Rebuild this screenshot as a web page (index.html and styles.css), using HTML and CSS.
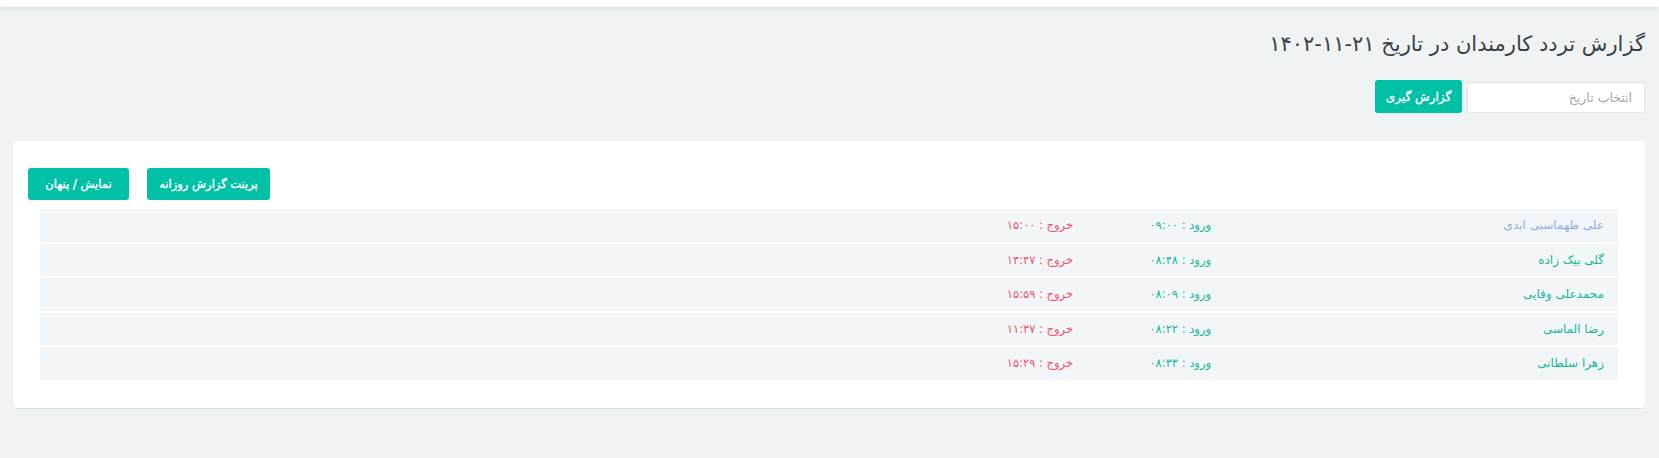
FILE: index.html
```html
<!DOCTYPE html>
<html lang="fa" dir="rtl">
<head>
<meta charset="utf-8">
<title>گزارش تردد</title>
<link rel="stylesheet" href="styles.css">
</head>
<body>
<header class="topbar"></header>
<main class="content">
  <h4 class="page-title">گزارش تردد کارمندان در تاریخ ۲۱-۱۱-۱۴۰۲</h4>
  <form class="filter">
    <input class="date-input" type="text" placeholder="انتخاب تاریخ">
    <button class="btn btn-report" type="button">گزارش گیری</button>
  </form>
  <section class="card">
    <div class="card-actions">
      <button class="btn btn-card btn-print" type="button">پرینت گزارش روزانه</button>
      <button class="btn btn-card btn-toggle" type="button">نمایش / پنهان</button>
    </div>
    <div class="list">
      <div class="row"><span class="name name-info">علی طهماسبی ابدی</span><span class="in">ورود : ۰۹:۰۰</span><span class="out">خروج : ۱۵:۰۰</span></div>
      <div class="row"><span class="name">گلی بیک زاده</span><span class="in">ورود : ۰۸:۴۸</span><span class="out">خروج : ۱۴:۴۷</span></div>
      <div class="row"><span class="name">محمدعلی وفایی</span><span class="in">ورود : ۰۸:۰۹</span><span class="out">خروج : ۱۵:۵۹</span></div>
      <div class="row"><span class="name">رضا الماسی</span><span class="in">ورود : ۰۸:۲۲</span><span class="out">خروج : ۱۱:۳۷</span></div>
      <div class="row"><span class="name">زهرا سلطانی</span><span class="in">ورود : ۰۸:۳۳</span><span class="out">خروج : ۱۵:۲۹</span></div>
    </div>
  </section>
</main>
</body>
</html>
```
FILE: styles.css
```css
* { box-sizing: border-box; }
html, body {
  margin: 0;
  padding: 0;
}
body {
  background: #eff3f4;
  font-family: "DejaVu Sans", "Noto Sans", sans-serif;
  color: #343a40;
  direction: rtl;
  height: 458px;
  overflow: hidden;
}
.topbar {
  height: 7px;
  background: #ffffff;
  box-shadow: 0 1px 4px rgba(0, 0, 0, 0.10);
}
.content {
  padding: 0 14px 0 13px;
}
.page-title {
  margin: 22px 0 0 0;
  font-size: 21px;
  font-weight: normal;
  line-height: 30px;
  color: #3a4149;
}
.filter {
  display: flex;
  align-items: flex-end;
  gap: 5px;
  margin-top: 21px;
}
.date-input {
  width: 178px;
  height: 31px;
  border: 1px solid #e1e5e8;
  border-radius: 3px;
  background: #fff;
  padding: 0 12px;
  font-family: inherit;
  font-size: 12.5px;
  color: #6c757d;
  outline: none;
}
.date-input::placeholder { color: #a3a9ae; }
.btn {
  border: none;
  border-radius: 3px;
  background: #00c0a5;
  color: #ffffff;
  font-family: inherit;
  font-weight: normal;
  -webkit-text-stroke: 0.35px #ffffff;
  cursor: pointer;
  padding: 0;
}
.btn-report {
  width: 87px;
  height: 33px;
  font-size: 12px;
}
.card {
  margin-top: 28px;
  background: #ffffff;
  border-radius: 4px;
  box-shadow: 0 1px 1px rgba(0, 0, 0, 0.08);
  padding: 27px 0 28px 0;
}
.card-actions {
  display: flex;
  justify-content: flex-end;
  gap: 18px;
  padding-left: 15px;
}
.btn-card {
  height: 32px;
  font-size: 11.5px;
}
.btn-print { width: 123px; }
.btn-toggle { width: 101px; }
.list {
  display: flex;
  flex-direction: column;
  gap: 2px;
  margin: 9px 27px 0 27px;
}
.row {
  display: grid;
  grid-template-columns: 393px 138px 1fr;
  align-items: center;
  height: 32.5px;
  background: #f3f6f9;
  font-size: 11.5px;
}
.row > span {
  padding-right: 14px;
  white-space: nowrap;
}
.name { font-size: 12px; }
.name, .in { color: #15b89a; }
.name-info { color: #8bb1e2; }
.out { color: #f1556c; }
```
